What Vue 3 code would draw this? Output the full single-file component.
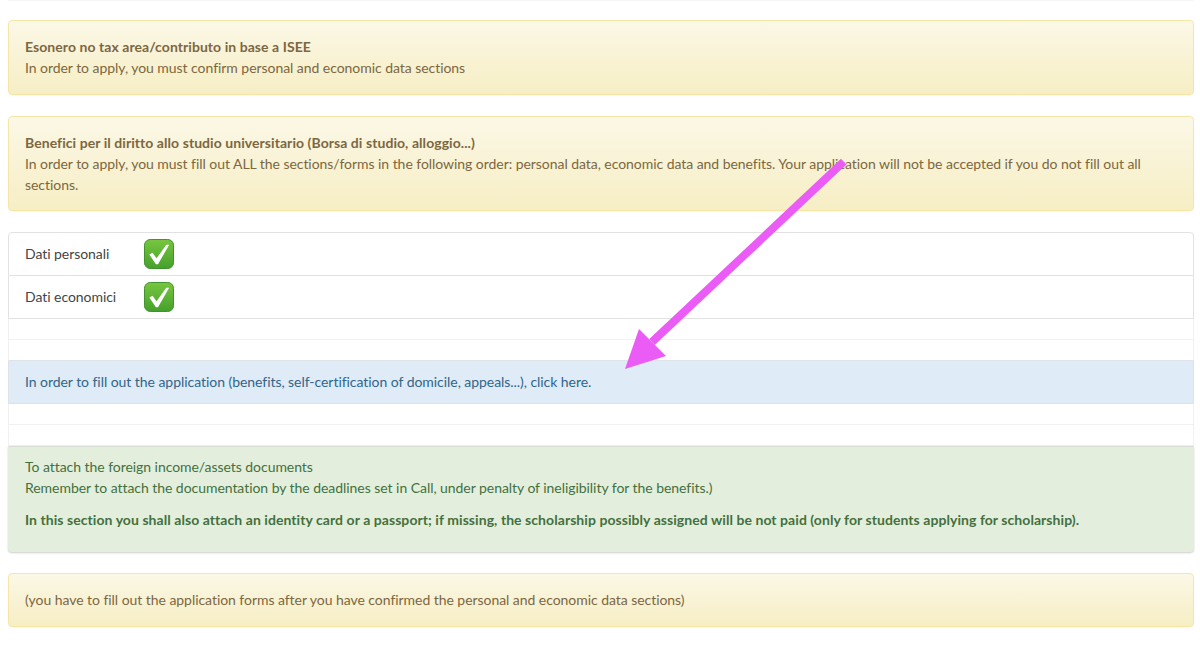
<script setup>
const checks = ['Dati personali', 'Dati economici']
</script>

<template>
  <div class="page">
    <div class="topline"></div>
    <div class="alert warn">
      <strong>Esonero no tax area/contributo in base a ISEE</strong><br />
      In order to apply, you must confirm personal and economic data sections
    </div>
    <div class="alert warn second">
      <strong>Benefici per il diritto allo studio universitario (Borsa di studio, alloggio...)</strong><br />
      In order to apply, you must fill out ALL the sections/forms in the following order: personal data, economic data and benefits. Your application will not be accepted if you do not fill out all sections.
    </div>
    <div class="list">
      <div v-for="c in checks" :key="c" class="item check-item">
        <span class="label">{{ c }}</span>
        <svg class="tick" viewBox="0 0 31 31" width="30" height="30">
          <defs>
            <linearGradient id="g" x1="0" y1="0" x2="0" y2="1">
              <stop offset="0" stop-color="#78c63f" />
              <stop offset="1" stop-color="#45a02c" />
            </linearGradient>
          </defs>
          <rect x="0.5" y="0.5" width="30" height="30" rx="6" fill="url(#g)" stroke="#3a8f27" />
          <path d="M5.5 16 L8.8 14.2 L13 20 L23 6 L26 6 L14.5 26 L12.3 26 Z" fill="#fff" />
        </svg>
      </div>
      <div class="item empty"></div>
      <div class="item empty before-info"></div>
      <div class="item info">In order to fill out the application (benefits, self-certification of domicile, appeals...), click here.</div>
      <div class="item empty"></div>
      <div class="item empty"></div>
      <div class="item success">
        <div>To attach the foreign income/assets documents<br />Remember to attach the documentation by the deadlines set in Call, under penalty of ineligibility for the benefits.)</div>
        <p><strong>In this section you shall also attach an identity card or a passport; if missing, the scholarship possibly assigned will be not paid (only for students applying for scholarship).</strong></p>
      </div>
    </div>
    <div class="alert warn last">(you have to fill out the application forms after you have confirmed the personal and economic data sections)</div>
    <svg class="arrow" viewBox="0 0 1200 648" width="1200" height="648">
      <path d="M843.7 161.7 L652 342" stroke="#ea5cf5" stroke-width="8" fill="none" />
      <polygon points="625,369 639,329 666,356" fill="#ea5cf5" />
    </svg>
  </div>
</template>

<style scoped>
.page {
  position: relative;
  width: 1200px;
  height: 648px;
  overflow: hidden;
  padding: 0 6px 0 8px;
  box-sizing: border-box;
  font-family: Lato, "Noto Sans", sans-serif;
  font-size: 14px;
  letter-spacing: -0.05px;
  line-height: 21px;
  color: #333;
  background: #fff;
}
.topline {
  height: 1px;
  margin-bottom: 19px;
  background: #f6f6f6;
}
.alert {
  padding: 15px 16px 16px;
  border: 1px solid #f5e6a8;
  border-radius: 4px;
  margin-bottom: 21px;
  box-sizing: border-box;
}
.alert.second { padding-top: 15px; padding-bottom: 15px; }
.warn {
  color: #7d6741;
  background: linear-gradient(#fbf8e6, #f6eec4);
  box-shadow: 0 1px 2px rgba(0, 0, 0, 0.04);
}
strong { font-weight: 700; letter-spacing: 0.06px; }
.list {
  display: flex;
  flex-direction: column;
  margin-bottom: 21px;
}
.item {
  box-sizing: border-box;
  border: 1px solid #e2e2e2;
  border-top-width: 0;
  padding: 0 16px;
}
.check-item {
  height: 43px;
  display: flex;
  align-items: center;
  color: #444;
}
.check-item:first-child {
  height: 44px;
  border-top-width: 1px;
  border-radius: 4px 4px 0 0;
}
.check-item .label { width: 119px; flex: none; padding-bottom: 2px; }
.tick { display: block; flex: none; }
.empty {
  height: 21px;
  border-color: #f1f1f1;
}
.before-info { border-bottom-color: #dde3e8; }
.info {
  height: 43px;
  display: flex;
  align-items: center;
  padding-bottom: 2px;
  color: #31658a;
  background: #dfebf6;
  border-color: #dde3e8;
}
.success {
  height: 106px;
  padding-top: 9px;
  color: #44703f;
  background: #e3efdc;
  border-color: #e3efdc;
  border-top: 1px solid #d9ddd8;
  border-radius: 0 0 4px 4px;
  box-shadow: 0 1px 2px rgba(0, 0, 0, 0.2);
}
.success p { margin: 11px 0 0; }
.arrow {
  position: absolute;
  left: 0;
  top: 0;
  pointer-events: none;
}
</style>
